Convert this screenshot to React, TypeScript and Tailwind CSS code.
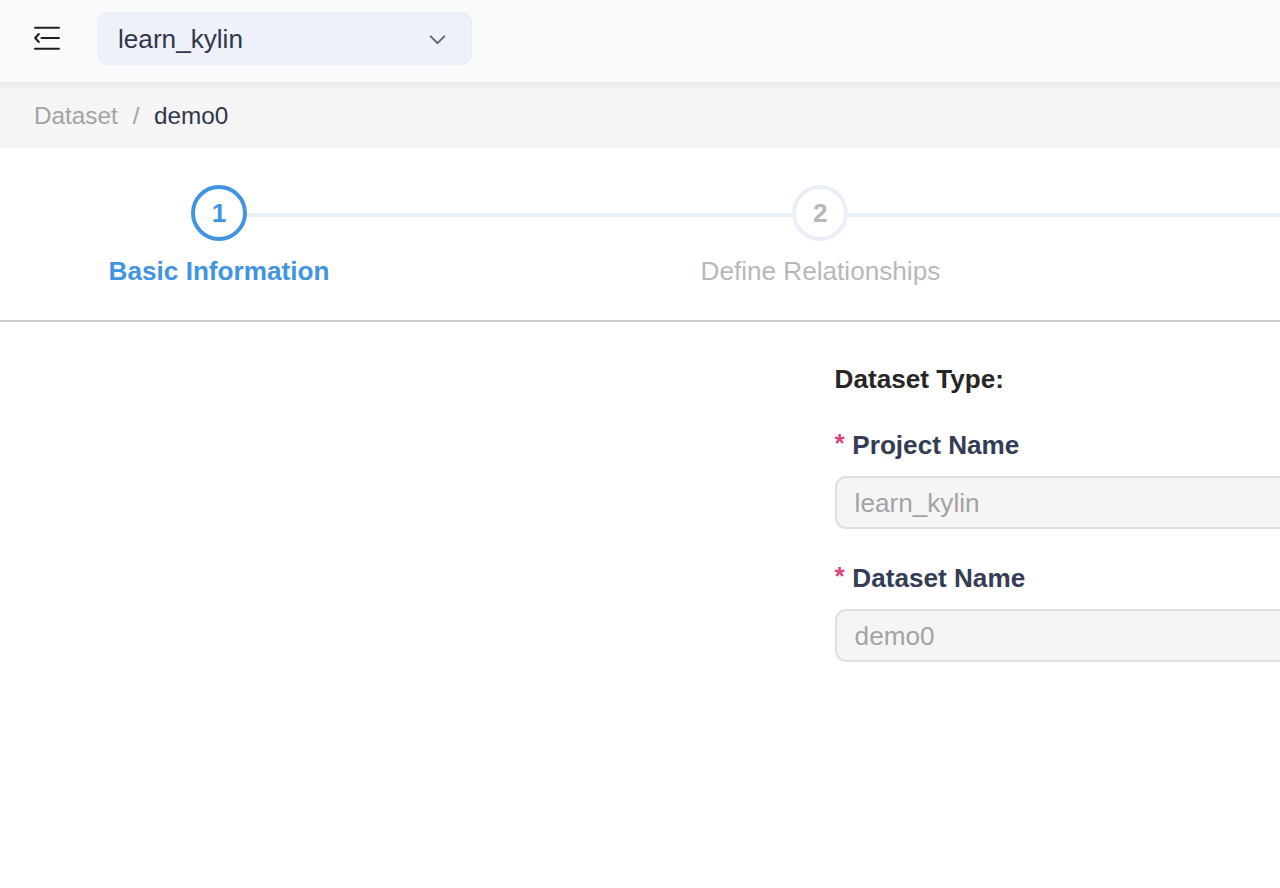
import React from "react";

function MenuFoldIcon() {
  return (
    <svg className="h-[26px] w-[28px] shrink-0" viewBox="0 0 28 26" fill="none" stroke="#1f1f1f" strokeWidth="1.9" strokeLinecap="round">
      <path d="M2 2.7H26M8.4 13H26M2 23.7H26" />
      <path d="M5.8 9L2.2 13L5.8 17" strokeWidth="2.1" strokeLinejoin="round" />
    </svg>
  );
}

function Header() {
  return (
    <header className="flex h-[82px] items-start bg-[#f9fafc] pl-[33px] pt-3">
      <div className="flex h-[52px] items-center">
        <MenuFoldIcon />
      </div>
      <button className="ml-9 flex h-[53px] w-[375px] items-center justify-between rounded-[11px] border-2 border-[#ebeff7] bg-[#eef1fa] pl-[19px] pr-[24px] text-[26.15px] leading-[30px] text-[#2f374c]">
        <span>learn_kylin</span>
        <svg className="mt-[3px] h-[12px] w-[17px]" viewBox="0 0 17 12" fill="none" stroke="#5c6579" strokeWidth="2" strokeLinecap="round" strokeLinejoin="round">
          <path d="M1.7 2.4L8.5 9.1L15.3 2.4" />
        </svg>
      </button>
    </header>
  );
}

function Breadcrumb() {
  return (
    <nav className="flex h-[66px] items-center bg-[#f5f5f5] bg-linear-to-b from-[#e7e8e8] to-[#f5f5f5] to-[9px] pl-[34px] pt-[2px] text-[24.3px] leading-[28px]">
      <span className="text-[#a3a3a3]">Dataset</span>
      <span className="ml-[15px] text-[#a3a3a3]">/</span>
      <span className="ml-[14.5px] text-[#2f374c]">demo0</span>
    </nav>
  );
}

function Step({ index, title, active }: { index: number; title: string; active?: boolean }) {
  return (
    <li className="flex w-[438px] shrink-0 flex-col items-center">
      <span
        className={
          active
            ? "flex size-14 items-center justify-center rounded-full border-4 border-[#4194df] text-[26.15px] leading-[30px] font-bold text-[#4194df]"
            : "flex size-14 items-center justify-center rounded-full border-4 border-[#e9eef7] text-[26.15px] leading-[30px] font-bold text-[#b8b8b8]"
        }
      >
        {index}
      </span>
      <span
        className={
          active
            ? "mt-[15px] text-[26.15px] leading-[30px] font-bold text-[#4194df]"
            : "mt-[15px] text-[26.15px] leading-[30px] text-[#b8b8b8]"
        }
      >
        {title}
      </span>
    </li>
  );
}

function Connector({ className }: { className: string }) {
  return <li aria-hidden="true" className={"mt-7 h-1 shrink-0 bg-[#e9eff7] " + className} />;
}

function Steps() {
  return (
    <ol className="flex h-[174px] items-start overflow-hidden border-b-2 border-[#cbcbcb] bg-white pt-[37px]">
      <Step index={1} title="Basic Information" active />
      <Connector className="-mx-[191px] w-[545.4px]" />
      <Step index={2} title="Define Relationships" />
      <Connector className="-ml-[191px] w-[546px]" />
    </ol>
  );
}

function Field({ label, value }: { label: string; value: string }) {
  return (
    <div className="mb-[34px]">
      <label className="flex h-[30px] items-center text-[26.15px] leading-[30px] font-bold text-[#343d55]">
        <span className="mr-[7.5px] -mt-1 text-[#dc4479]">*</span>
        {label}
      </label>
      <div className="mt-4 flex h-[53px] w-[748px] items-center rounded-[11px] border-2 border-[#e0e0e0] bg-[#f5f5f5] pl-[18px] text-[26.15px] leading-[30px] text-[#a3a3a3]">
        {value}
      </div>
    </div>
  );
}

export default function App() {
  return (
    <div className="h-[888px] w-full overflow-hidden bg-white font-['Liberation_Sans',Arial,sans-serif]">
      <Header />
      <Breadcrumb />
      <Steps />
      <main className="ml-[834.6px] pt-[42px]">
        <h2 className="mb-9 text-[26.15px] leading-[30px] font-bold text-[#262626]">Dataset Type:</h2>
        <Field label="Project Name" value="learn_kylin" />
        <Field label="Dataset Name" value="demo0" />
      </main>
    </div>
  );
}
